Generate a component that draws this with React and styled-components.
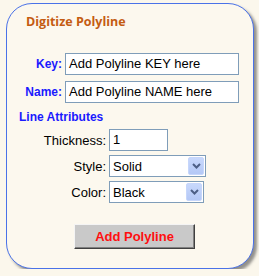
import React from 'react'
import styled, { createGlobalStyle } from 'styled-components'

const Global = createGlobalStyle`
    body {
        margin: 0;
        background: #fbf7ec;
        font-family: "Liberation Sans", Arial, sans-serif;
    }
`

const Panel = styled.div`
    box-sizing: border-box;
    margin: 3px 0 0 6px;
    width: 248px;
    height: 266px;
    border: 1px solid #4a72e8;
    border-radius: 26px;
    background: #fcf8ee;
    box-shadow: 3px 3px 3px rgba(60, 60, 60, 0.55);
    display: flex;
    flex-direction: column;
`

const Title = styled.div`
    margin: 9px 0 0 19px;
    font-family: "Open Sans", sans-serif;
    font-weight: 700;
    font-size: 12.5px;
    line-height: 18px;
    color: #c45c12;
`

const Fields = styled.div`
    display: grid;
    grid-template-columns: ${p => p.$labelWidth}px auto;
    column-gap: 3px;
    row-gap: ${p => p.$gap}px;
    align-items: center;
    margin-top: ${p => p.$top}px;
`

const Label = styled.label`
    text-align: right;
    font-size: ${p => (p.$bold ? 12 : 13)}px;
    font-weight: ${p => (p.$bold ? 700 : 400)};
    color: ${p => (p.$bold ? '#1a1aff' : '#000')};
`

const TextBox = styled.div`
    box-sizing: border-box;
    width: ${p => p.$width}px;
    height: 22px;
    border: 1px solid #7f9db9;
    background: #fff;
    padding: 0 3px;
    font-size: 13px;
    line-height: 20px;
    color: #000;
    white-space: nowrap;
`

const Section = styled.div`
    margin: 7px 0 0 12px;
    font-size: 12px;
    font-weight: 700;
    color: #1a1aff;
`

const SelectBox = styled.div`
    box-sizing: border-box;
    width: ${p => p.$width}px;
    height: 22px;
    border: 1px solid #7f9db9;
    background: #fff;
    display: flex;
    align-items: center;
    justify-content: space-between;
    padding: 0 1px 0 3px;
    font-size: 13px;
    color: #000;
`

const Arrow = styled.span`
    box-sizing: border-box;
    width: 16px;
    height: 18px;
    border-radius: 2px;
    border: 1px solid #c6d6fb;
    background: linear-gradient(#c8d8fc, #b4c8f6);
    display: flex;
    align-items: center;
    justify-content: center;
`

const Footer = styled.div`
    display: flex;
    margin: 21px 0 0 67px;
`

const Button = styled.button`
    box-sizing: border-box;
    width: 121px;
    height: 25px;
    background: #c9c9c9;
    border: 1px solid;
    border-color: #f4f4f4 #404040 #404040 #f4f4f4;
    box-shadow: inset -1px -1px 0 #808080;
    font-family: "Liberation Sans", Arial, sans-serif;
    font-size: 13px;
    font-weight: 700;
    color: #ff1010;
    padding: 0;
`

const Select = ({ value, width }) => (
    <SelectBox $width={width}>
        {value}
        <Arrow>
            <svg width="9" height="6" viewBox="0 0 9 6">
                <path d="M1 1 L4.5 4.5 L8 1" fill="none" stroke="#4d5f86" strokeWidth="2" />
            </svg>
        </Arrow>
    </SelectBox>
)

const App = () => {
    return (
        <>
            <Global />
            <Panel>
                <Title>Digitize Polyline</Title>

                <Fields $labelWidth={55} $gap={6} $top={22}>
                    <Label $bold>Key:</Label>
                    <TextBox $width={174}>Add Polyline KEY here</TextBox>
                    <Label $bold>Name:</Label>
                    <TextBox $width={174}>Add Polyline NAME here</TextBox>
                </Fields>

                <Section>Line Attributes</Section>

                <Fields $labelWidth={99} $gap={4} $top={5}>
                    <Label>Thickness:</Label>
                    <TextBox $width={59}>1</TextBox>
                    <Label>Style:</Label>
                    <Select value="Solid" width={97} />
                    <Label>Color:</Label>
                    <Select value="Black" width={95} />
                </Fields>

                <Footer>
                    <Button>Add Polyline</Button>
                </Footer>
            </Panel>
        </>
    )
}

export default App
